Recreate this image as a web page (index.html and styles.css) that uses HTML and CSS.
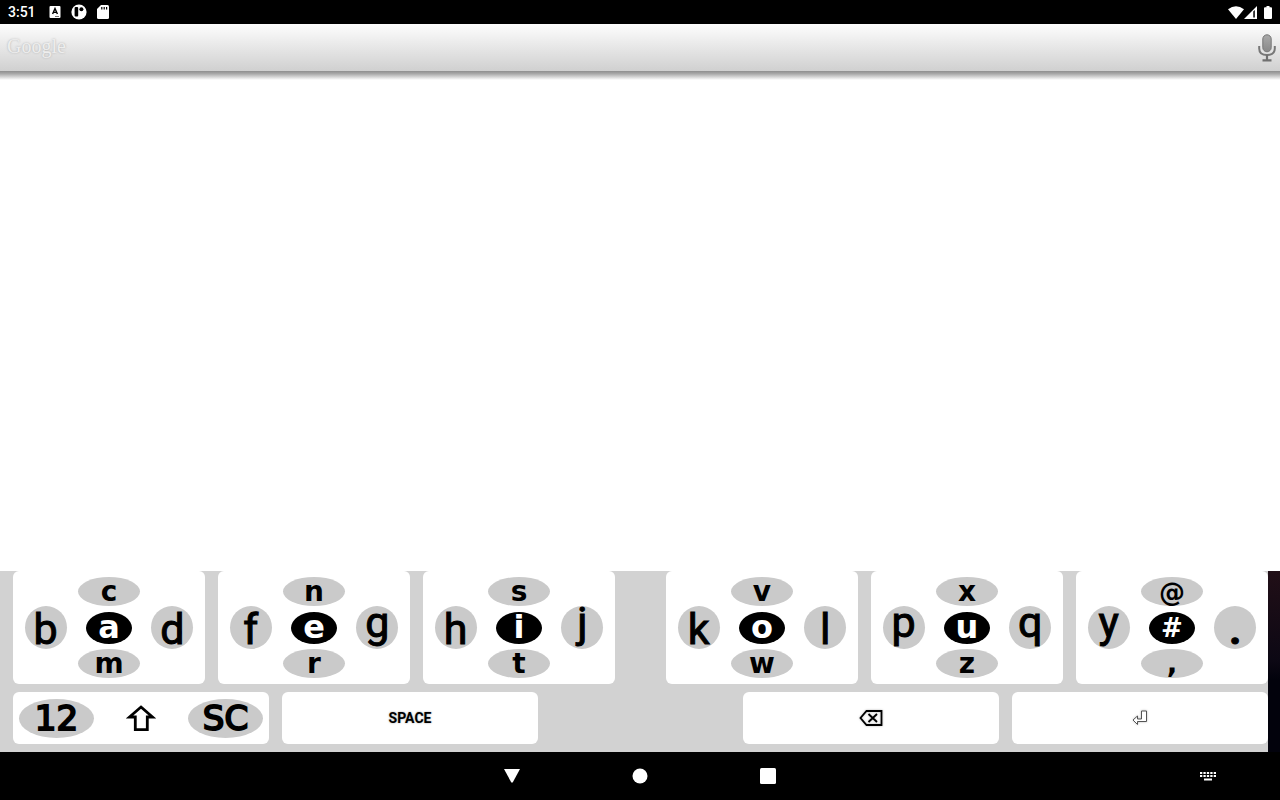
FILE: index.html
```html
<!DOCTYPE html>
<html lang="en">
<head>
    <meta charset="UTF-8">
    <meta name="viewport" content="width=device-width, initial-scale=1.0">
    <title>Search</title>
    <link rel="stylesheet" href="styles.css">
</head>
<body>
    <header class="status-bar">
        <span class="clock">3:51</span>
        <svg class="icon-app" width="12" height="12" viewBox="0 0 12 12"><rect x="0.5" width="11" height="12" rx="1" fill="#fff"/><path d="M3.6 8L6 2.500l2.400 5.500M4.400 6.400h3.200" fill="none" stroke="#000" stroke-width="1.400"/><path d="M6 10.500h4" stroke="#777"/></svg>
        <svg class="icon-app" width="16" height="16" viewBox="0 0 16 16"><circle cx="8" cy="8" r="7.6" fill="#fff"/><rect x="3.6" y="3" width="3.6" height="9.6" rx="1" fill="#000"/><circle cx="10.4" cy="5.2" r="2" fill="#000"/></svg>
        <svg class="icon-app" width="12" height="14" viewBox="0 0 12 14"><path d="M4 0h6.5Q12 0 12 1.500V12.500Q12 14 10.500 14h-9Q0 14 0 12.500V4z" fill="#fff"/><path d="M4.800 2v2.600M7.200 2v2.600M9.600 2v2.600" stroke="#000" stroke-width="1.200"/></svg>
        <div class="system-icons">
            <svg width="16" height="13" viewBox="0 0 16 13"><path d="M0 3.300Q8-3 16 3.300L8 13z" fill="#fff"/></svg>
            <svg width="14" height="13" viewBox="0 0 14 13"><path d="M0 13L13 0v13z" fill="#fff"/><path d="M9.300 5.500v6h1.500V4z" fill="#000"/></svg>
            <svg class="battery" width="8" height="13" viewBox="0 0 8 13"><path d="M2.500 0h3v1.300H7q1 0 1 1V12q0 1-1 1H1q-1 0-1-1V2.300q0-1 1-1h1.500z" fill="#fff"/></svg>
        </div>
    </header>

    <form class="search-bar">
        <label class="logo" for="search">Google</label>
        <input type="text" id="search" name="search">
        <button type="button" class="mic" aria-label="Voice search">
            <svg width="18" height="28" viewBox="0 0 18 28">
                <defs><linearGradient id="micFill" x1="0" y1="0" x2="0" y2="1"><stop offset="0" stop-color="#aaa"/><stop offset="1" stop-color="#888"/></linearGradient></defs>
                <rect x="4.800" y="0.800" width="8.400" height="17" rx="4.200" fill="url(#micFill)" stroke="#777"/>
                <path d="M1.200 12v2.500Q1.200 21 9 21t7.800-6.500V12" fill="none" stroke="#777" stroke-width="2"/>
                <path d="M9 21v4.500M4.500 26.300h9" stroke="#707070" stroke-width="2.200"/>
            </svg>
        </button>
    </form>

    <main class="page"></main>

    <section class="keyboard-area">
        <div class="keyboard">
            <div class="row letters">
                <button class="key cross"><span class="up">c</span><span class="left">b</span><span class="mid">a</span><span class="right">d</span><span class="down">m</span></button>
                <button class="key cross"><span class="up">n</span><span class="left">f</span><span class="mid">e</span><span class="right tail">g</span><span class="down">r</span></button>
                <button class="key cross"><span class="up">s</span><span class="left">h</span><span class="mid">i</span><span class="right tail">j</span><span class="down">t</span></button>
                <div class="split"></div>
                <button class="key cross"><span class="up">v</span><span class="left">k</span><span class="mid">o</span><span class="right">l</span><span class="down">w</span></button>
                <button class="key cross"><span class="up">x</span><span class="left tail">p</span><span class="mid">u</span><span class="right tail">q</span><span class="down">z</span></button>
                <button class="key cross"><span class="up symbol">@</span><span class="left tail">y</span><span class="mid symbol">#</span><span class="right symbol">.</span><span class="down">,</span></button>
            </div>
            <div class="row actions">
                <button class="key modes">
                    <span class="mode">12</span>
                    <svg width="30" height="28" viewBox="0 0 30 28"><path d="M15 3L26.500 13H21.300V25.700H9.300V13H3.500z" fill="#fff" stroke="#000" stroke-width="2.800"/></svg>
                    <span class="mode">SC</span>
                </button>
                <button class="key space">SPACE</button>
                <div class="split"></div>
                <button class="key" aria-label="Delete">
                    <svg class="glow" width="24" height="16" viewBox="0 0 24 16"><path d="M7.500 1H22.500V15H7.500L1.500 8z" fill="none" stroke="#000" stroke-width="1.800"/><path d="M9.500 4l8.500 8M18 4l-8.500 8" stroke="#000" stroke-width="1.800"/></svg>
                </button>
                <button class="key" aria-label="Enter">
                    <svg class="glow" width="16" height="16" viewBox="0 0 16 16"><path d="M9.500 1h5v10.500H5.500V14.500L1 10l4.500-4v3h4z" fill="#fff" stroke="#555" stroke-width="1"/></svg>
                </button>
            </div>
        </div>
    </section>

    <nav class="nav-bar">
        <div class="nav-main">
            <button aria-label="Back"><svg width="16" height="14" viewBox="0 0 16 14"><path d="M0 0h16L8.700 13.500h-1.400z" fill="#fff"/></svg></button>
            <button aria-label="Home"><svg width="16" height="16" viewBox="0 0 16 16"><circle cx="8" cy="8" r="7.500" fill="#fff"/></svg></button>
            <button aria-label="Recent apps"><svg width="16" height="16" viewBox="0 0 16 16"><rect width="16" height="16" rx="1.500" fill="#fff"/></svg></button>
        </div>
        <button class="switch" aria-label="Switch keyboard"><svg width="16" height="9" viewBox="0 0 16 9"><path d="M0 1h16M0 4h16" stroke="#fff" stroke-width="2" stroke-dasharray="2.300 1.125"/><path d="M4 7.500h8" stroke="#fff" stroke-width="2"/></svg></button>
    </nav>
</body>
</html>
```
FILE: styles.css
```css
* { box-sizing: border-box; }
body { margin: 0; min-height: 100vh; display: flex; flex-direction: column; background: #fff; font-family: Roboto, sans-serif; }
button { margin: 0; padding: 0; border: 0; background: none; color: #000; font-family: inherit; }
svg { display: block; }

.status-bar { display: flex; align-items: center; height: 24px; padding: 0 8px; background: #000; color: #fff; }
.clock { font-size: 14px; font-weight: 500; margin-right: 3px; }
.icon-app { margin-left: 10px; }
.system-icons { display: flex; align-items: center; margin-left: auto; }
.battery { margin-left: 6px; }

.search-bar { display: flex; align-items: center; height: 47px; padding: 0 4px 0 7px; background: linear-gradient(#fdfdfd, #d0d0d0); }
.logo { font-family: "Liberation Serif", serif; font-size: 20px; color: #eee; text-shadow: 0 0 2px #aaa; padding-bottom: 2px; }
.search-bar input { flex: 1; min-width: 0; height: 40px; border: 0; outline: 0; background: none; font-size: 18px; }

.page { flex: 1; background: linear-gradient(#8e8e8e, #a8a8a8 30%, #fff) no-repeat; background-size: 100% 9px; }

.keyboard-area { padding-right: 12px; background: linear-gradient(#210f17, #0c0814 50%, #02020c 60%); }
.keyboard { padding: 0 0 8px 13px; background: #d2d2d2; }
.row { display: flex; gap: 13px; }
.key { flex: 1; display: flex; align-items: center; justify-content: center; min-width: 0; background: #fff; border-radius: 6px; }
.letters .split { width: 25px; }
.actions { display: grid; grid-template-columns: 256fr 256fr 179fr 256fr 256fr; margin-top: 8px; }
.actions .key { height: 52px; }

.cross { display: grid; grid-template: 29px 43px 29px / 1fr 1fr 1fr; grid-template-areas: ". up ." "left mid right" ". down ."; justify-items: center; padding: 6px 1px 6px; height: 113px; }
.cross span { display: flex; align-items: center; justify-content: center; line-height: 1; border-radius: 50%; background: #cacaca; }
.cross .up, .cross .down { width: 62px; height: 29px; font: bold 28px/28px "DejaVu Sans", sans-serif; }
.cross .left, .cross .right { width: 42px; height: 43px; font-size: 43px; font-weight: 400; -webkit-text-stroke: 1px #000; padding-top: 3px; }
.cross .mid { width: 46px; height: 32px; background: #000; color: #fff; font: bold 32px/28px "DejaVu Sans", sans-serif; padding-bottom: 2px; }
.cross .tail { padding: 0 0 11px; }
.cross .up.symbol { font-size: 26px; }
.cross .mid.symbol { font-size: 26px; padding: 0; }
.cross .right.symbol { font-weight: 700; }
.up { grid-area: up; }
.left { grid-area: left; }
.mid { grid-area: mid; }
.right { grid-area: right; }
.down { grid-area: down; }
.left, .right, .mid { align-self: center; }

.actions .modes { justify-content: space-between; padding: 0 6px; }
.mode { display: flex; align-items: center; justify-content: center; width: 75px; height: 39px; border-radius: 50%; background: #cacaca; font: 34px/38px "DejaVu Sans", sans-serif; -webkit-text-stroke: 2px #000; }
.space { font-size: 14px; font-weight: 700; text-shadow: 0 0 2px #999; }
.glow { filter: drop-shadow(0 0 1px #bbb); }

.nav-bar { display: grid; grid-template-columns: 1fr auto 1fr; align-items: center; height: 48px; background: #000; }
.nav-main { grid-column: 2; display: flex; }
.nav-main button { display: flex; align-items: center; justify-content: center; width: 128px; height: 48px; }
.switch { justify-self: end; margin-right: 64px; }
```
